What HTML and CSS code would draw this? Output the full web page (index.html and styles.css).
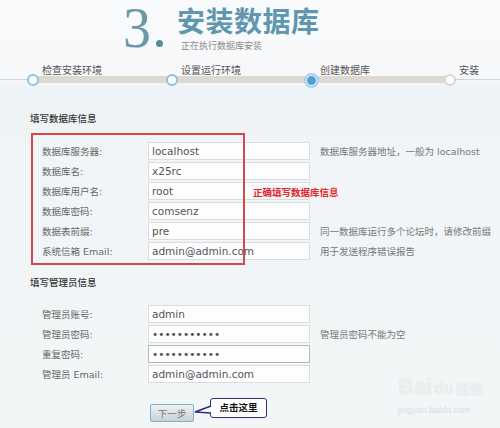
FILE: index.html
```html
<!DOCTYPE html>
<html lang="zh-CN">
<head>
    <meta charset="UTF-8">
    <meta name="viewport" content="width=device-width, initial-scale=1.0">
    <title>安装数据库</title>
    <link rel="stylesheet" href="styles.css">
</head>
<body>
    <div class="header">
        <div class="num">3<span class="num-dot"></span></div>
        <div class="title-block">
            <div class="title">安装数据库</div>
            <div class="subtitle">正在执行数据库安装</div>
        </div>
    </div>

    <div class="steps">
        <div class="step done"><span class="step-label">检查安装环境</span><span class="circle"></span></div>
        <div class="step done"><span class="step-label">设置运行环境</span><span class="circle"></span></div>
        <div class="step current"><span class="step-label">创建数据库</span><span class="circle"></span></div>
        <div class="step todo"><span class="step-label">安装</span><span class="circle"></span></div>
    </div>

    <div class="form">
        <div class="section-title">填写数据库信息</div>
        <div class="rows db-rows">
            <div class="row"><label>数据库服务器:</label><input type="text" value="localhost"><span class="note">数据库服务器地址，一般为 localhost</span></div>
            <div class="row"><label>数据库名:</label><input type="text" value="x25rc"></div>
            <div class="row"><label>数据库用户名:</label><input type="text" value="root"></div>
            <div class="row"><label>数据库密码:</label><input type="text" value="comsenz"></div>
            <div class="row"><label>数据表前缀:</label><input type="text" value="pre_"><span class="note">同一数据库运行多个论坛时，请修改前缀</span></div>
            <div class="row"><label>系统信箱 Email:</label><input type="text" value="admin@admin.com"><span class="note">用于发送程序错误报告</span></div>
            <div class="mark-box"></div>
            <div class="mark-text">正确填写数据库信息</div>
        </div>

        <div class="section-title second">填写管理员信息</div>
        <div class="rows admin-rows">
            <div class="row"><label>管理员账号:</label><input type="text" value="admin"></div>
            <div class="row"><label>管理员密码:</label><input type="password" value="comsenz1234"><span class="note">管理员密码不能为空</span></div>
            <div class="row"><label>重复密码:</label><input type="password" class="active-input" value="comsenz1234"></div>
            <div class="row"><label>管理员 Email:</label><input type="text" value="admin@admin.com"></div>
        </div>

        <div class="actions">
            <button type="button" class="next-btn">下一步</button>
            <div class="callout">
                <svg class="callout-tail" width="18" height="14" viewBox="0 0 18 14">
                    <polygon points="17,3 1,9 17,10" fill="#fff"/>
                    <polyline points="17,3 1,9 17,10" fill="none" stroke="#2e2d78" stroke-width="1.6"/>
                </svg>
                点击这里
            </div>
        </div>
    </div>

    <div class="watermark">
        <div class="wm-logo">Bai<span class="wm-du">du</span><span class="wm-cn">经验</span></div>
        <div class="wm-url">jingyan.baidu.com</div>
    </div>
</body>
</html>
```

FILE: styles.css
```css
body {
    margin: 0;
    width: 500px;
    height: 428px;
    overflow: hidden;
    position: relative;
    font-family: "DejaVu Sans", "Noto Sans CJK SC", sans-serif;
    color: #555;
    background: linear-gradient(#f8fafb 0, #f6f8f9 80px, #ecf2f5 88px, #f1f5f7 160px, #f3f6f7 428px);
}

/* header */
.header {
    display: flex;
    height: 64px;
    padding-left: 123px;
}
.num {
    font-family: "Liberation Serif", serif;
    font-size: 56px;
    line-height: 50px;
    margin-top: 3px;
    color: #6c97aa;
    display: flex;
    align-items: flex-end;
    height: 50px;
}
.num-dot {
    width: 7px;
    height: 7px;
    border-radius: 50%;
    background: #5b899c;
    margin: 0 0 6px 5px;
}
.title-block {
    margin-left: 14px;
}
.title {
    font-family: "Noto Sans CJK SC", sans-serif;
    font-weight: bold;
    font-size: 28px;
    line-height: 38px;
    margin-top: 1px;
    color: #5f98ae;
    letter-spacing: 0.5px;
}
.subtitle {
    font-family: "Noto Sans CJK SC", sans-serif;
    font-size: 9px;
    line-height: 10px;
    margin: 2px 0 0 4px;
    color: #8c8c8c;
}

/* steps */
.steps {
    position: relative;
    display: flex;
    padding-left: 27px;
    height: 26px;
}
.steps::before {
    content: "";
    position: absolute;
    left: 0;
    right: 0;
    top: 15px;
    height: 1px;
    background: #cdd6da;
}
.steps::after {
    content: "";
    position: absolute;
    left: 33px;
    width: 416px;
    top: 12px;
    height: 7px;
    background: #dcd9d2;
}
.step {
    position: relative;
    z-index: 1;
    flex: none;
    width: 139px;
    display: flex;
    flex-direction: column;
}
.step.todo {
    width: auto;
}
.step-label {
    font-family: "Noto Sans CJK SC", sans-serif;
    font-size: 10px;
    line-height: 12px;
    margin-left: 15px;
    color: #555;
}
.circle {
    box-sizing: border-box;
    width: 12px;
    height: 12px;
    margin-top: -2px;
    border-radius: 50%;
    background: #fff;
    border: 2px solid #8fc2de;
}
.current .circle {
    width: 15px;
    height: 15px;
    margin: -3px 0 0 -1.5px;
    background: #4e9fd6;
    border: 2px solid #a9d3ec;
    box-shadow: inset 0 0 0 1px #fff;
}
.todo .circle {
    border-color: #d6d6d6;
}

/* form */
.form {
    position: relative;
    padding-left: 30px;
}
.section-title {
    font-family: "Noto Sans CJK SC", sans-serif;
    font-size: 9.5px;
    line-height: 14px;
    margin-top: 21px;
    color: #333;
    font-weight: 500;
}
.section-title.second {
    margin-top: 15px;
}
.rows {
    position: relative;
    margin-top: 17px;
}
.admin-rows {
    margin-top: 16px;
}
.row {
    display: flex;
    align-items: center;
    height: 18px;
    margin-bottom: 2px;
}
.row label {
    width: 118px;
    padding-left: 12px;
    box-sizing: border-box;
    font-size: 9.5px;
    color: #666;
}
.row input {
    box-sizing: border-box;
    width: 162px;
    height: 18px;
    padding: 0 3px;
    border: 1px solid #d9dde0;
    background: #fdfdfd;
    font-family: "DejaVu Sans", sans-serif;
    font-size: 10.5px;
    line-height: 16px;
    color: #555;
    outline: none;
}
.row input.active-input {
    border-color: #b3b9bd;
}
.note {
    margin-left: 10px;
    font-size: 9.5px;
    color: #777;
    white-space: nowrap;
}
.mark-box {
    position: absolute;
    left: 1px;
    top: -9px;
    width: 214px;
    height: 132px;
    box-sizing: border-box;
    border: 2px solid #d6474a;
}
.mark-text {
    position: absolute;
    left: 223px;
    top: 43px;
    font-family: "Noto Sans CJK SC", sans-serif;
    font-size: 9.5px;
    line-height: 14px;
    font-weight: bold;
    color: #e3262b;
    background: #f2f5f7;
    padding-right: 2px;
}

/* button + callout */
.actions {
    display: flex;
    align-items: flex-start;
    margin-top: 15px;
    padding-left: 120px;
}
.next-btn {
    width: 44px;
    height: 18px;
    margin-top: 6px;
    padding: 0;
    border: 1px solid #79b1d0;
    border-radius: 2px;
    background: linear-gradient(#eef1f2, #c9d1d5);
    font-family: "Noto Sans CJK SC", sans-serif;
    font-size: 9.5px;
    color: #777;
}
.callout {
    position: relative;
    margin-left: 16px;
    width: 57px;
    height: 20px;
    box-sizing: border-box;
    border: 1.6px solid #2e2d78;
    border-radius: 3px;
    background: #fff;
    font-family: "Noto Sans CJK SC", sans-serif;
    font-size: 9.5px;
    font-weight: bold;
    color: #111;
    line-height: 17px;
    text-align: center;
}
.callout-tail {
    position: absolute;
    left: -17px;
    top: 4px;
}

/* watermark */
.watermark {
    position: absolute;
    left: 398px;
    top: 374px;
    color: rgba(255, 255, 255, 0.6);
    text-shadow: 0 0 1px #d0d5d8;
}
.wm-logo {
    font-family: "Liberation Sans", sans-serif;
    font-size: 22px;
    font-weight: bold;
    line-height: 26px;
}
.wm-du {
    font-size: 16px;
    margin-left: 2px;
}
.wm-cn {
    font-family: "Noto Sans CJK SC", sans-serif;
    font-size: 14px;
    margin-left: 2px;
}
.wm-url {
    font-family: "Liberation Sans", sans-serif;
    font-size: 9px;
    margin-top: 3px;
    color: rgba(230, 234, 236, 0.9);
}
```
